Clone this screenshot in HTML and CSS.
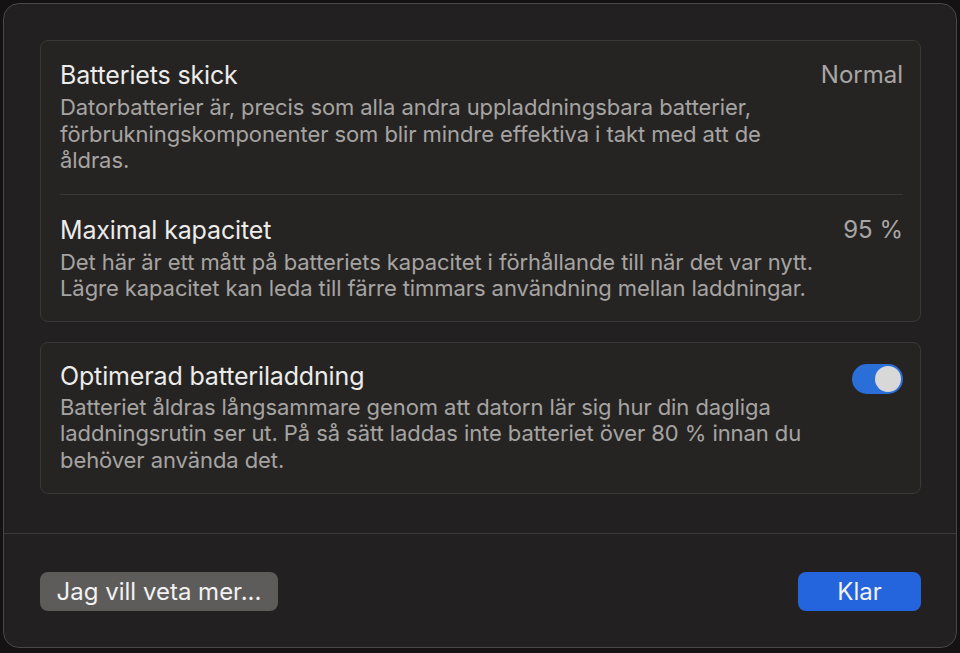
FILE: index.html
```html
<!DOCTYPE html>
<html lang="sv">
<head>
<meta charset="utf-8">
<link rel="stylesheet" href="styles.css">
</head>
<body>
<div class="window">
  <div class="content">
    <section class="card">
      <div class="row first">
        <div class="text">
          <div class="title">Batteriets skick</div>
          <div class="desc">Datorbatterier är, precis som alla andra uppladdningsbara batterier, förbrukningskomponenter som blir mindre effektiva i takt med att de åldras.</div>
        </div>
        <div class="value">Normal</div>
      </div>
      <div class="sep"></div>
      <div class="row second">
        <div class="text">
          <div class="title">Maximal kapacitet</div>
          <div class="desc">Det här är ett mått på batteriets kapacitet i förhållande till när det var nytt. Lägre kapacitet kan leda till färre timmars användning mellan laddningar.</div>
        </div>
        <div class="value">95 %</div>
      </div>
    </section>
    <section class="card">
      <div class="row third">
        <div class="text">
          <div class="title">Optimerad batteriladdning</div>
          <div class="desc">Batteriet åldras långsammare genom att datorn lär sig hur din dagliga laddningsrutin ser ut. På så sätt laddas inte batteriet över 80 % innan du behöver använda det.</div>
        </div>
        <div class="toggle"><div class="knob"></div></div>
      </div>
    </section>
  </div>
  <div class="footer">
    <button class="btn btn-secondary">Jag vill veta mer...</button>
    <button class="btn btn-primary">Klar</button>
  </div>
</div>
</body>
</html>
```
FILE: styles.css
```css
* { box-sizing: border-box; }
html, body { margin: 0; height: 100%; }
body {
  background: #141212;
  padding: 3px;
  font-family: Inter, "Noto Sans", "Liberation Sans", sans-serif;
}
.window {
  width: 954px;
  height: 645px;
  background: #222020;
  border: 1px solid #4a4846;
  border-radius: 16px;
  display: flex;
  flex-direction: column;
  overflow: hidden;
}
.content {
  padding: 36px 35px 0 36px;
  display: flex;
  flex-direction: column;
  gap: 20px;
  height: 530px;
  flex: none;
  border-bottom: 1px solid #3c3a38;
}
.card {
  background: #262423;
  border: 1px solid #3b3937;
  border-radius: 8px;
  padding: 0 17px 0 19px;
}
.row {
  display: flex;
  justify-content: space-between;
  align-items: flex-start;
}
.row.first { padding: 17px 0 20px; }
.row.second { padding: 18px 0 19px; }
.row.third { padding: 16px 0 20px; }
.text { flex: 0 1 772px; }
.title {
  font-size: 25px;
  line-height: 34px;
  color: #ececea;
  letter-spacing: -0.15px;
  margin-bottom: 2px;
}
.row.third .title { margin-bottom: 1px; }
.desc {
  font-size: 22px;
  line-height: 26.5px;
  color: #a6a4a2;
  letter-spacing: -0.08px;
}
.value {
  flex: none;
  white-space: nowrap;
  font-size: 24px;
  line-height: 34px;
  color: #a8a6a4;
}
.sep {
  height: 1px;
  background: #393735;
}
.toggle {
  flex: none;
  margin-top: 5px;
  width: 51px;
  height: 30px;
  border-radius: 15px;
  background: #2a6fd8;
  display: flex;
  align-items: center;
  justify-content: flex-end;
  padding: 0 2px;
}
.knob {
  width: 26px;
  height: 26px;
  border-radius: 50%;
  background: #d9d8d8;
}
.footer {
  flex: 1;
  display: flex;
  justify-content: space-between;
  align-items: flex-start;
  padding: 38px 35px 0 36px;
}
.btn {
  font-family: inherit;
  font-size: 24px;
  height: 39px;
  border: none;
  border-radius: 8px;
  color: #f2f2f2;
  padding: 0;
}
.btn-secondary {
  width: 238px;
  background: #5e5c5a;
}
.btn-primary {
  width: 123px;
  background: #2464dc;
}
```
